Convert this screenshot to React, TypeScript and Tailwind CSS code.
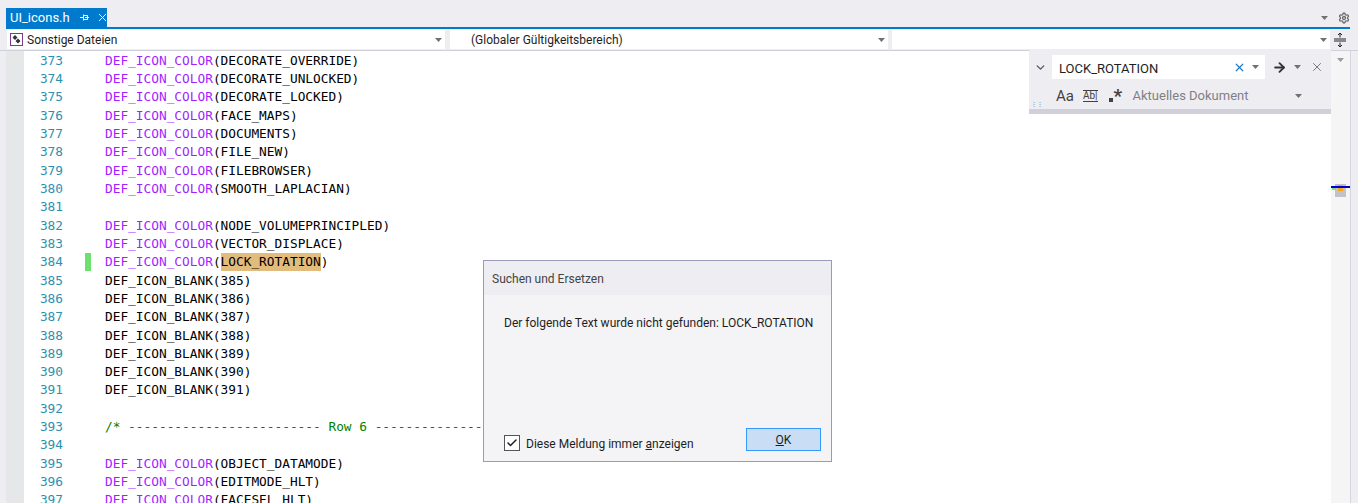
import { Check, X, ArrowRight, ChevronDown, Settings } from 'lucide-react';

const ui = { fontFamily: 'Roboto, "Noto Sans", sans-serif' };

type Line = { n: number; kind?: 'color' | 'blank' | 'comment'; arg?: string };

const lines: Line[] = [
  { n: 373, kind: 'color', arg: 'DECORATE_OVERRIDE' },
  { n: 374, kind: 'color', arg: 'DECORATE_UNLOCKED' },
  { n: 375, kind: 'color', arg: 'DECORATE_LOCKED' },
  { n: 376, kind: 'color', arg: 'FACE_MAPS' },
  { n: 377, kind: 'color', arg: 'DOCUMENTS' },
  { n: 378, kind: 'color', arg: 'FILE_NEW' },
  { n: 379, kind: 'color', arg: 'FILEBROWSER' },
  { n: 380, kind: 'color', arg: 'SMOOTH_LAPLACIAN' },
  { n: 381 },
  { n: 382, kind: 'color', arg: 'NODE_VOLUMEPRINCIPLED' },
  { n: 383, kind: 'color', arg: 'VECTOR_DISPLACE' },
  { n: 384, kind: 'color', arg: 'LOCK_ROTATION' },
  { n: 385, kind: 'blank', arg: '385' },
  { n: 386, kind: 'blank', arg: '386' },
  { n: 387, kind: 'blank', arg: '387' },
  { n: 388, kind: 'blank', arg: '388' },
  { n: 389, kind: 'blank', arg: '389' },
  { n: 390, kind: 'blank', arg: '390' },
  { n: 391, kind: 'blank', arg: '391' },
  { n: 392 },
  { n: 393, kind: 'comment' },
  { n: 394 },
  { n: 395, kind: 'color', arg: 'OBJECT_DATAMODE' },
  { n: 396, kind: 'color', arg: 'EDITMODE_HLT' },
  { n: 397, kind: 'color', arg: 'FACESEL_HLT' },
];

function Caret({ className = '' }: { className?: string }) {
  return (
    <svg width="7" height="4" viewBox="0 0 7 4" className={className}>
      <path d="M0 0h7L3.5 4z" fill="currentColor" />
    </svg>
  );
}

function CodeLine({ line }: { line: Line }) {
  return (
    <div className="flex h-[18.33px] items-center whitespace-pre">
      <span className="w-[39px] text-right text-[#2b91af]">{line.n}</span>
      <span className="ml-[22px] flex h-full w-[20px] justify-start">
        {line.n === 384 && <span className="h-full w-[6px] bg-[#6ee06e]" />}
      </span>
      {line.kind === 'color' && (
        <span className="flex h-full items-center text-black">
          <span className="text-[#a31fff]">DEF_ICON_COLOR</span>
          <span>(</span>
          {line.n === 384 ? (
            <span className="flex h-full items-center bg-[#e2bc7d]">{line.arg}</span>
          ) : (
            <span>{line.arg}</span>
          )}
          <span>)</span>
        </span>
      )}
      {line.kind === 'blank' && <span className="text-black">DEF_ICON_BLANK({line.arg})</span>}
      {line.kind === 'comment' && (
        <span className="text-[#008000]">/* ------------------------- Row 6 --------------------------- */</span>
      )}
    </div>
  );
}

function Combo({ label, className, icon }: { label?: string; className: string; icon?: boolean }) {
  return (
    <div className={`mt-[1px] flex h-[19px] items-center bg-white pr-[3px] text-[12px] text-[#1e1e1e] ${className}`}>
      {icon && (
        <svg width="13" height="13" viewBox="0 0 13 13" className="mr-[4px] ml-[3px] shrink-0">
          <rect x="0.5" y="0.5" width="12" height="12" fill="#fff" stroke="#7a3b8f" />
          <path d="M5 2l2.5 2.5L5 7 2.5 4.5zM8 5.5l2.5 2.5L8 10.5 5.5 8z" fill="#333" />
        </svg>
      )}
      <span className={icon ? '' : 'ml-[21px]'}>{label}</span>
      <Caret className="ml-auto text-[#717171]" />
    </div>
  );
}

export default function App() {
  return (
    <div className="relative h-[503px] w-[1358px] overflow-hidden bg-[#eeeef2]" style={ui}>
      {/* Tab-Leiste */}
      <div className="flex h-[27px] items-end pl-[6px]">
        <div className="flex h-[19px] w-[101px] items-center bg-[#007acc] pl-[4px] text-[13px] text-white">
          <span>UI_icons.h</span>
          <svg width="9" height="7" viewBox="0 0 9 7" className="ml-[10px] shrink-0">
            <path d="M0 3.5h3M3.5 0.5v6M3.5 1.5h4v4h-4M5 3.5h4" fill="none" stroke="#fff" strokeWidth="1" />
          </svg>
          <X size={13} strokeWidth={1.8} className="ml-[7px] shrink-0 text-white" />
        </div>
        <div className="ml-auto flex h-[19px] items-center gap-[10px] pr-[8px]">
          <Caret className="text-[#717171]" />
          <Settings size={12} strokeWidth={2.6} className="text-[#6a6a6a]" />
        </div>
      </div>
      <div className="ml-[6px] mr-[8px] h-[2px] bg-[#007acc]" />

      {/* Navigationsleiste */}
      <div className="flex h-[21px] pl-[7px]">
        <Combo label="Sonstige Dateien" icon className="w-[438px]" />
        <Combo label="(Globaler Gültigkeitsbereich)" className="ml-[5px] w-[438px]" />
        <Combo className="ml-[4px] w-[438px]" />
        <div className="flex w-[20px] items-center justify-center">
          <svg width="12" height="14" viewBox="0 0 12 14">
            <path d="M0 6h12M0 8h12M6 0v4.5M6 9.5V14M4 2l2-2 2 2M4 12l2 2 2-2" fill="none" stroke="#222" />
          </svg>
        </div>
      </div>

      {/* Editor */}
      <div className="flex h-[453px] border-t border-[#cfd0da]">
        <div className="ml-[6px] w-[18px] bg-[#e6e7e8]" />
        <div className="relative min-w-0 flex-1 overflow-hidden bg-white font-['DejaVu_Sans_Mono'] text-[12.8px]">
          {lines.map((line) => (
            <CodeLine key={line.n} line={line} />
          ))}
        </div>
        <div className="relative w-[19px] bg-[#f5f5f5]">
          <Caret className="mx-auto mt-[7px] text-[#9a9aa1]" />
          <div className="absolute top-[133px] left-[4px] h-[13px] w-[11px] bg-[#c2c3c9]">
            <div className="absolute top-[1px] left-[3px] h-[6px] w-[5px] bg-[#f5a623]" />
          </div>
          <div className="absolute top-[136px] left-[1px] h-[3px] w-[4px] bg-[#7fe07f]" />
          <div className="absolute top-[135px] left-0 h-[2px] w-[19px] bg-[#0000cd]" />
        </div>
        <div className="w-[8px] border-l border-[#d6d6de] bg-[#eeeef2]" />
      </div>

      {/* Suchfeld */}
      <div className="absolute top-[50px] left-[1029px] h-[64px] w-[302px] border-b-[5px] border-[#cfd0da] bg-[#eeeef2]">
        <div className="flex h-[29px] items-center pt-[5px]">
          <ChevronDown size={13} strokeWidth={2.6} className="ml-[5px] text-[#5a5a5a]" />
          <div className="ml-[5px] flex h-[24px] w-[213px] items-center bg-white pl-[7px] text-[13px] text-[#1e1e1e]">
            <span className="pt-[3px]">LOCK_ROTATION</span>
            <X size={13} strokeWidth={2.2} className="ml-auto text-[#1e7bc4]" />
            <Caret className="mx-[6px] text-[#717171]" />
          </div>
          <ArrowRight size={15} strokeWidth={3} className="ml-[7px] text-[#333]" />
          <Caret className="ml-[7px] text-[#717171]" />
          <X size={14} strokeWidth={1.6} className="ml-[9px] text-[#717171]" />
        </div>
        <div className="mt-[7px] flex h-[20px] items-center text-[13px]">
          <span className="ml-[27px] text-[15px] leading-none text-[#424242]">Aa</span>
          <span className="ml-[9px] border-y border-[#424242] text-[10px] leading-[10px] text-[#424242]">Ab|</span>
          <span className="ml-[11px] flex w-[15px] items-end text-[#424242]">
            <span className="mb-[1px] h-[4px] w-[4px] bg-[#424242]" />
            <span className="ml-[1px] text-[19px] font-bold leading-[14px]">*</span>
          </span>
          <span className="ml-[9px] text-[#7f7f85]">Aktuelles Dokument</span>
          <Caret className="ml-auto mr-[29px] text-[#717171]" />
        </div>
        <div className="absolute bottom-[1px] left-[2px] h-[6px] w-[7px] text-[6px] leading-[3px] text-[#777]">⋮⋮</div>
      </div>

      {/* Meldungsdialog */}
      <div className="absolute top-[260px] left-[483px] flex h-[202px] w-[349px] flex-col border border-[#9a9ac0] bg-[#f4f4f6] text-[12px] text-[#1e1e1e]">
        <div className="flex h-[34px] items-center bg-[#eeeef2] pt-[2px] pl-[8px] text-[#444]">Suchen und Ersetzen</div>
        <div className="mt-[19px] pl-[20px]">Der folgende Text wurde nicht gefunden: LOCK_ROTATION</div>
        <div className="mt-auto mb-[10px] flex items-end pr-[10px] pl-[20px]">
          <div className="flex h-[16px] w-[16px] items-center justify-center border border-[#555] bg-white">
            <Check size={12} strokeWidth={3} className="text-[#1e1e1e]" />
          </div>
          <span className="mb-[-2px] ml-[6px]">
            Diese Meldung immer <span className="underline">a</span>nzeigen
          </span>
          <div className="ml-auto flex h-[23px] w-[75px] items-center justify-center border border-[#3399ff] bg-[#c9def5] pt-[1px]">
            <span>
              <span className="underline">O</span>K
            </span>
          </div>
        </div>
      </div>
    </div>
  );
}
